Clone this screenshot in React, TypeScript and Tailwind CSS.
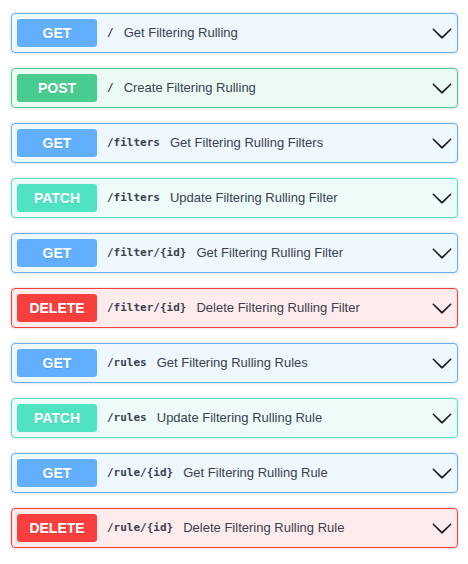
import React from 'react';

type Method = 'GET' | 'POST' | 'PATCH' | 'DELETE';

const styles: Record<Method, { box: string; badge: string }> = {
  GET: { box: 'border-[#61affe] bg-[#61affe]/10', badge: 'bg-[#61affe]' },
  POST: { box: 'border-[#49cc90] bg-[#49cc90]/10', badge: 'bg-[#49cc90]' },
  PATCH: { box: 'border-[#50e3c2] bg-[#50e3c2]/10', badge: 'bg-[#50e3c2]' },
  DELETE: { box: 'border-[#f93e3e] bg-[#f93e3e]/10', badge: 'bg-[#f93e3e]' },
};

const ops: { method: Method; path: string; summary: string }[] = [
  { method: 'GET', path: '/', summary: 'Get Filtering Rulling' },
  { method: 'POST', path: '/', summary: 'Create Filtering Rulling' },
  { method: 'GET', path: '/filters', summary: 'Get Filtering Rulling Filters' },
  { method: 'PATCH', path: '/filters', summary: 'Update Filtering Rulling Filter' },
  { method: 'GET', path: '/filter/{id}', summary: 'Get Filtering Rulling Filter' },
  { method: 'DELETE', path: '/filter/{id}', summary: 'Delete Filtering Rulling Filter' },
  { method: 'GET', path: '/rules', summary: 'Get Filtering Rulling Rules' },
  { method: 'PATCH', path: '/rules', summary: 'Update Filtering Rulling Rule' },
  { method: 'GET', path: '/rule/{id}', summary: 'Get Filtering Rulling Rule' },
  { method: 'DELETE', path: '/rule/{id}', summary: 'Delete Filtering Rulling Rule' },
];

function Arrow() {
  return (
    <svg width="22" height="22" viewBox="0 0 20 20" className="shrink-0 fill-[#1b1b1b]">
      <path d="M17.418 6.109c.272-.268.709-.268.979 0s.271.701 0 .969l-7.908 7.83c-.27.268-.707.268-.979 0l-7.908-7.83c-.27-.268-.27-.701 0-.969.271-.268.709-.268.979 0L10 13.25l7.418-7.141z" />
    </svg>
  );
}

export default function App() {
  return (
    <div className="w-[468px] min-h-[564px] bg-white pt-[13px] pl-[11px] pr-[10px] flex flex-col gap-[15px] font-['Liberation_Sans',Arial,sans-serif]">
      {ops.map((op, i) => (
        <div
          key={i}
          className={`h-10 flex items-center pl-[5px] pr-[4px] border rounded-[4px] shadow-[0_0_3px_rgba(0,0,0,0.19)] ${styles[op.method].box}`}
        >
          <span
            className={`w-20 h-7 shrink-0 flex items-center justify-center rounded-[3px] text-white text-[14px] font-bold [text-shadow:0_1px_0_rgba(0,0,0,0.1)] ${styles[op.method].badge}`}
          >
            {op.method}
          </span>
          <span className="ml-[10px] font-['DejaVu_Sans_Mono',monospace] font-semibold text-[11px] text-[#3b4151]">
            {op.path}
          </span>
          <span className="ml-[10px] flex-1 text-[13px] text-[#3b4151]">{op.summary}</span>
          <Arrow />
        </div>
      ))}
    </div>
  );
}
